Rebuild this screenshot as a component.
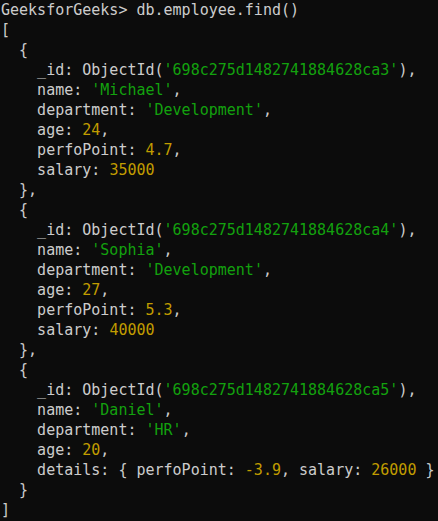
const G = ({ children }: { children: React.ReactNode }) => (
  <span className="text-[#13a10e]">{children}</span>
)
const Y = ({ children }: { children: React.ReactNode }) => (
  <span className="text-[#c19c00]">{children}</span>
)

const employees = [
  { id: '698c275d1482741884628ca3', name: 'Michael', dept: 'Development', age: 24, perfo: '4.7', salary: '35000' },
  { id: '698c275d1482741884628ca4', name: 'Sophia', dept: 'Development', age: 27, perfo: '5.3', salary: '40000' },
]

export default function App() {
  return (
    <div
      className="w-[438px] h-[521px] overflow-hidden bg-[#0c0c0c] text-[#cccccc] text-[15px] leading-[20px] whitespace-pre pl-px"
      style={{ fontFamily: '"DejaVu Sans Mono", "Liberation Mono", monospace' }}
    >
      <div>GeeksforGeeks&gt; db.employee.find()</div>
      <div>[</div>
      {employees.map((e) => (
        <div key={e.id}>
          <div>{'  {'}</div>
          <div>{"    _id: ObjectId("}<G>'{e.id}'</G>{'),'}</div>
          <div>{'    name: '}<G>'{e.name}'</G>,</div>
          <div>{'    department: '}<G>'{e.dept}'</G>,</div>
          <div>{'    age: '}<Y>{e.age}</Y>,</div>
          <div>{'    perfoPoint: '}<Y>{e.perfo}</Y>,</div>
          <div>{'    salary: '}<Y>{e.salary}</Y></div>
          <div>{'  },'}</div>
        </div>
      ))}
      <div>{'  {'}</div>
      <div>{"    _id: ObjectId("}<G>'698c275d1482741884628ca5'</G>{'),'}</div>
      <div>{'    name: '}<G>'Daniel'</G>,</div>
      <div>{'    department: '}<G>'HR'</G>,</div>
      <div>{'    age: '}<Y>20</Y>,</div>
      <div>{'    details: { perfoPoint: '}<Y>-3.9</Y>{', salary: '}<Y>26000</Y>{' }'}</div>
      <div>{'  }'}</div>
      <div>]</div>
    </div>
  )
}
